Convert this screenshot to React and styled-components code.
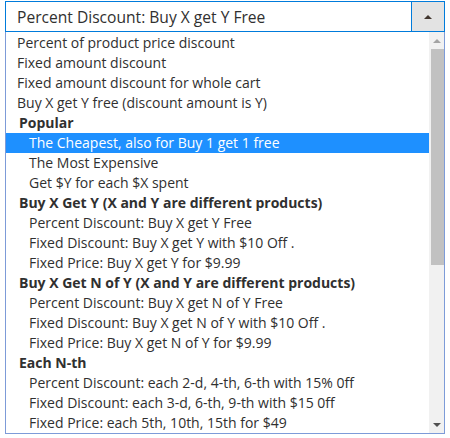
import styled, { createGlobalStyle } from 'styled-components';

const GlobalStyle = createGlobalStyle`
	html, body {
		margin: 0;
		padding: 0;
		background: #ffffff;
	}
	body {
		font-family: 'Open Sans', 'Liberation Sans', sans-serif;
		color: #303030;
	}
`;

const groups = [
	{
		options: [
			'Percent of product price discount',
			'Fixed amount discount',
			'Fixed amount discount for whole cart',
			'Buy X get Y free (discount amount is Y)',
		],
	},
	{
		label: 'Popular',
		options: ['The Cheapest, also for Buy 1 get 1 free', 'The Most Expensive', 'Get $Y for each $X spent'],
	},
	{
		label: 'Buy X Get Y (X and Y are different products)',
		options: [
			'Percent Discount: Buy X get Y Free',
			'Fixed Discount: Buy X get Y with $10 Off .',
			'Fixed Price: Buy X get Y for $9.99',
		],
	},
	{
		label: 'Buy X Get N of Y (X and Y are different products)',
		options: [
			'Percent Discount: Buy X get N of Y Free',
			'Fixed Discount: Buy X get N of Y with $10 Off .',
			'Fixed Price: Buy X get N of Y for $9.99',
		],
	},
	{
		label: 'Each N-th',
		options: [
			'Percent Discount: each 2-d, 4-th, 6-th with 15% 0ff',
			'Fixed Discount: each 3-d, 6-th, 9-th with $15 0ff',
			'Fixed Price: each 5th, 10th, 15th for $49',
		],
	},
];

const selected = 'The Cheapest, also for Buy 1 get 1 free';

export default function App() {
	return (
		<>
			<GlobalStyle />
			<Wrap>
				<Select>
					<Value>Percent Discount: Buy X get Y Free</Value>
					<ToggleBtn>
						<Triangle $up $color="#41362f" />
					</ToggleBtn>
				</Select>
				<List>
					<Options>
						{groups.map((g, i) => (
							<div key={i}>
								{g.label && <GroupLabel>{g.label}</GroupLabel>}
								{g.options.map((o) => (
									<Option key={o} $nested={!!g.label} $active={o === selected}>
										{o}
									</Option>
								))}
							</div>
						))}
					</Options>
					<Scrollbar>
						<ScrollArrow>
							<Triangle $up $color="#a3a3a3" />
						</ScrollArrow>
						<Track>
							<Thumb />
						</Track>
						<ScrollArrow>
							<Triangle $color="#505050" />
						</ScrollArrow>
					</Scrollbar>
				</List>
			</Wrap>
		</>
	);
}

const Wrap = styled.div`
	width: 440px;
	padding: 1px 0 0 5px;
`;

const Select = styled.div`
	display: flex;
	height: 31px;
	box-sizing: border-box;
	border: 1px solid #007bdb;
`;

const Value = styled.div`
	flex: 1;
	display: flex;
	align-items: center;
	padding-left: 11px;
	font-size: 15.6px;
	color: #303030;
	white-space: nowrap;
`;

const ToggleBtn = styled.div`
	width: 32px;
	display: flex;
	align-items: center;
	justify-content: center;
	background: #e3e3e3;
	border-left: 1px solid #007bdb;
`;

const Triangle = styled.span`
	width: 0;
	height: 0;
	border-left: 4px solid transparent;
	border-right: 4px solid transparent;
	${({ $up, $color }) =>
		$up ? `border-bottom: 4px solid ${$color};` : `border-top: 4px solid ${$color};`}
`;

const List = styled.div`
	display: flex;
	height: 402px;
	box-sizing: border-box;
	border: 1px solid #7d9bd8;
	border-top: none;
	overflow: hidden;
`;

const Options = styled.div`
	flex: 1;
	padding-top: 1px;
	font-size: 14px;
`;

const GroupLabel = styled.div`
	height: 20px;
	line-height: 20px;
	padding-left: 13px;
	font-weight: 700;
	color: #303030;
	white-space: nowrap;
`;

const Option = styled.div`
	height: 20px;
	line-height: 20px;
	padding-left: ${({ $nested }) => ($nested ? '23px' : '11px')};
	white-space: nowrap;
	background: ${({ $active }) => ($active ? '#1e90ff' : 'transparent')};
	color: ${({ $active }) => ($active ? '#ffffff' : '#303030')};
`;

const Scrollbar = styled.div`
	width: 15px;
	display: flex;
	flex-direction: column;
	background: #f1f1f1;
`;

const ScrollArrow = styled.div`
	height: 17px;
	display: flex;
	align-items: center;
	justify-content: center;
`;

const Track = styled.div`
	flex: 1;
	padding: 0 0 0 2px;
`;

const Thumb = styled.div`
	height: 216px;
	background: #c1c1c1;
`;
